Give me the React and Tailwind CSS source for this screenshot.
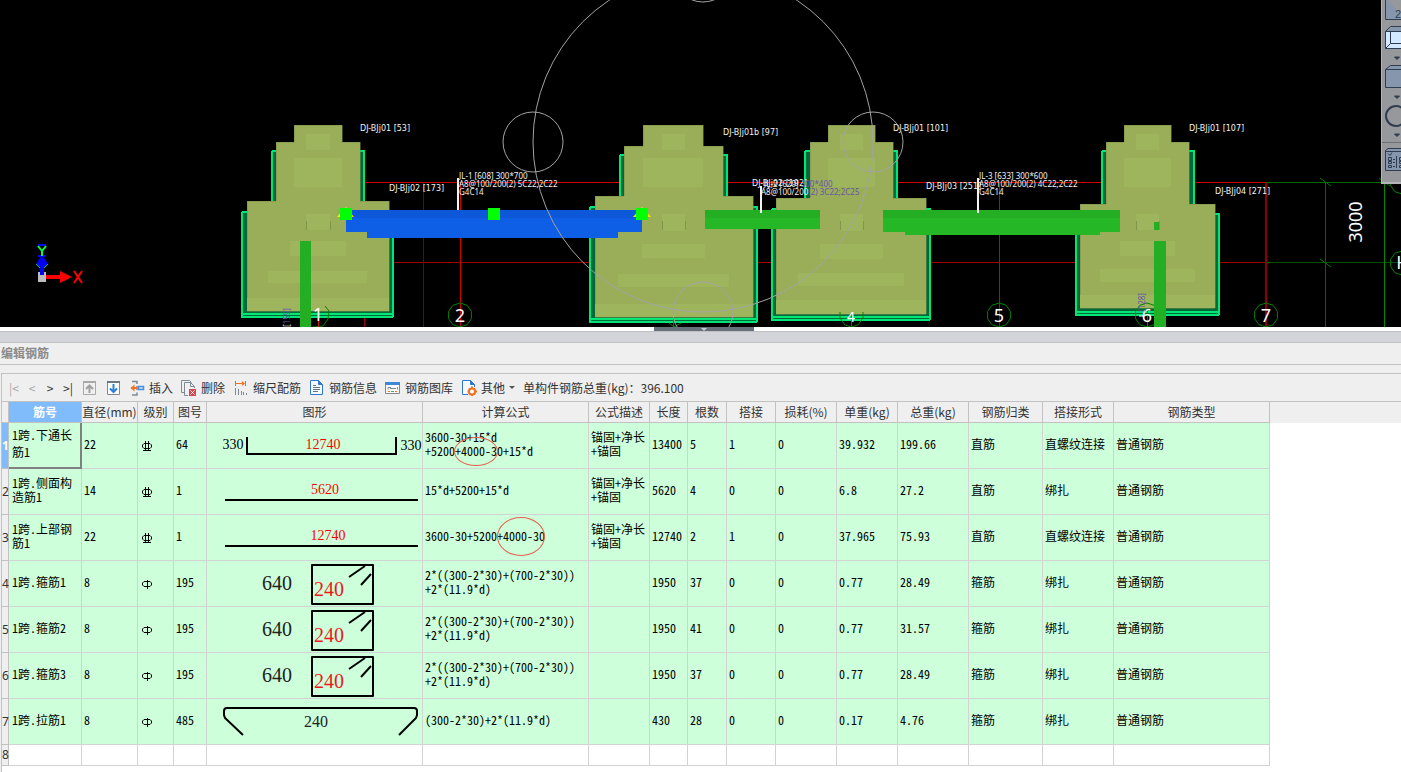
import React from "react";
import { clsx } from "clsx";

const UI_FONT = "font-['Noto_Sans_CJK_SC',sans-serif]";
// half-width latin glyphs, so that digits line up with the grid of the CJK text
const GRID_FONT =
  "font-['Noto_Sans_CJK_SC',sans-serif] [font-feature-settings:'hwid']";

const foundations = [
  {
    outer: [
      [272, 151, 92, 60],
      [242, 212, 151, 105],
    ],
    body: "M294 125H342V142H360V201H389V311H247V201H276V142H294Z",
    steps: [
      [306, 134, 24, 16],
      [294, 158, 48, 29],
      [306, 214, 24, 16],
      [290, 241, 56, 15],
      [268, 271, 99, 12],
      [247, 298, 142, 13],
    ],
  },
  {
    outer: [
      [620, 155, 107, 55],
      [590, 207, 167, 115],
    ],
    body: "M643 125H703V146H723V196H753V317H595V196H624V146H643Z",
    steps: [
      [662, 134, 23, 16],
      [643, 158, 60, 29],
      [662, 214, 23, 17],
      [642, 244, 63, 14],
      [618, 274, 111, 13],
      [595, 304, 158, 13],
    ],
  },
  {
    outer: [
      [805, 151, 92, 60],
      [772, 209, 158, 111],
    ],
    body: "M828 125H875V142H893V198H926V314H776V198H810V142H828Z",
    steps: [
      [840, 134, 23, 16],
      [828, 158, 47, 29],
      [840, 214, 23, 17],
      [820, 244, 63, 15],
      [798, 273, 106, 13],
      [776, 300, 150, 14],
    ],
  },
  {
    outer: [
      [1102, 151, 92, 60],
      [1076, 214, 143, 101],
    ],
    body: "M1124 125H1171V142H1189V204H1215V308H1080V204H1106V142H1124Z",
    steps: [
      [1136, 134, 23, 16],
      [1124, 158, 47, 29],
      [1136, 214, 23, 16],
      [1120, 241, 55, 15],
      [1100, 269, 95, 13],
      [1080, 295, 135, 13],
    ],
  },
];

const footingNotes = [
  [360, 131, "DJ-BJj01 [53]"],
  [389, 191, "DJ-BJj02 [173]"],
  [723, 135, "DJ-BJj01b [97]"],
  [752, 186, "DJ-BJj02 [192]"],
  [893, 131, "DJ-BJj01 [101]"],
  [926, 189, "DJ-BJj03 [251]"],
  [1189, 131, "DJ-BJj01 [107]"],
  [1215, 194, "DJ-BJj04 [271]"],
];

const beamNotes = [
  [459, 179, "JL-1 [608] 300*700"],
  [459, 187, "A8@100/200(2) 5C22;2C22"],
  [459, 195, "G4C14"],
  [979, 179, "JL-3 [633] 300*600"],
  [979, 187, "A8@100/200(2) 4C22;2C22"],
  [979, 195, "G4C14"],
];

const axisBubble = (cx, cy) => {
  const pts = [];
  for (let i = 0; i < 10; i++) {
    const a = (Math.PI / 5) * i;
    pts.push(`${(cx + 12 * Math.sin(a)).toFixed(1)},${(cy - 12 * Math.cos(a)).toFixed(1)}`);
  }
  return pts.join(" ");
};

const ModelCanvas = () => (
  <svg
    viewBox="0 0 1401 327"
    preserveAspectRatio="xMinYMin slice"
    className="block h-[327px] w-full bg-black"
  >
    {/* axis grid */}
    <g fill="none" shapeRendering="crispEdges">
      <path d="M360 182.5H1266M460.5 182V327M999.5 182V327" stroke="#d00000" />
      <path d="M389 262.5H1266M364.5 182V327" stroke="#a00000" />
      <path d="M423.5 182V327" stroke="#780000" />
      <path d="M1266 182V327" stroke="#900000" strokeWidth="2" />
      <path d="M1266 182.5H1401M1325.5 182V327" stroke="#006800" />
      <path d="M1266 262.5H1401" stroke="#005000" />
      <path d="M1384.5 182V327" stroke="#008800" />
    </g>
    <path
      d="M1320 178L1331 186M1320 259L1331 267M1379 178L1390 186"
      stroke="#007a00"
      fill="none"
    />

    {foundations.map((f) => (
      <g key={f.body} shapeRendering="crispEdges">
        {f.outer.map(([x, y, w, h]) => (
          <rect
            key={`${x}-${y}`}
            x={x}
            y={y}
            width={w}
            height={h}
            rx="1"
            fill="#006a3a"
            stroke="#00e676"
            strokeWidth="2"
          />
        ))}
        <path
          d={`M${f.outer[1][0]} ${f.outer[1][1] + f.outer[1][3] - 3}h${f.outer[1][2]}`}
          stroke="#00e676"
          strokeWidth="2"
        />
        <path d={f.body} fill="#9aae59" stroke="#7c8c48" strokeWidth="0.5" />
        {f.steps.map(([x, y, w, h]) => (
          <rect key={`${x}-${y}`} x={x} y={y} width={w} height={h} fill="#9fb55d" />
        ))}
        <path
          d={`M${f.steps[2][0]}.5 221V230M${f.steps[2][0] + f.steps[2][2]}.5 221V230`}
          stroke="#83944b"
        />
      </g>
    ))}

    {/* axis bubbles under the grid */}
    <g fill="none" stroke="#008200">
      <polygon points={axisBubble(460, 315)} />
      <polygon points={axisBubble(999, 315)} />
      <polygon points={axisBubble(1147, 315)} />
      <polygon points={axisBubble(1266, 315)} />
      <polygon points={axisBubble(1402, 263)} />
      <polygon points={axisBubble(1402, 182)} />
      <path d="M325 306L329 311L328 319L323 326L313 327" />
      <path d="M840 312V318L845 325L851 327L858 325L863 318V312M669 323L674 327L681 323" />
    </g>
    <path
      d="M318.5 318V327M673.5 318V327M851.5 314V327M1147.5 311V327"
      stroke="#d01818"
      shapeRendering="crispEdges"
    />
    <g
      className="font-['Noto_Sans',sans-serif] text-[18px]"
      fill="#ffffff"
      textAnchor="middle"
    >
      <text x="318" y="321">1</text>
      <text x="460" y="322">2</text>
      <text x="851" y="322" className="text-[14px]">4</text>
      <text x="999" y="322">5</text>
      <text x="1147" y="322">6</text>
      <text x="1266" y="322">7</text>
      <text x="1403" y="269">H</text>
      <text transform="translate(1362 222) rotate(-90)">3000</text>
    </g>
    <path d="M1139 316H1144" stroke="#ffffff" />

    {/* beams */}
    <g shapeRendering="crispEdges">
      <path d="M346 210H642V232H618V238H367V232H346Z" fill="#0f5fe6" />
      <path d="M346 210H642V218H346Z" fill="#0d58d8" />
      <path d="M705 210H820V229H705Z" fill="#26b726" />
      <path d="M705 210H820V218H705Z" fill="#24ae24" />
      <path d="M883 210H1120V232H1100V235H905V232H883Z" fill="#26b726" />
      <path d="M883 210H1120V218H883Z" fill="#24ae24" />
      <path d="M300 241H311V327H300ZM1154 241H1166V327H1154ZM1154 222H1159V230H1154Z" fill="#24ae24" />
      <path d="M457 178H459V210H457ZM760 186H762V213H760ZM977 178H979V213H977Z" fill="#f4f4f4" />
    </g>
    <path d="M346 207L354 217H337ZM642 207L651 217H633Z" fill="#ffee00" />
    <path d="M340 208h12v12h-12zM488 208h12v12h-12zM636 208h12v12h-12z" fill="#00ff00" />

    <g className="font-['DejaVu_Sans',sans-serif] text-[8px]" fill="#f2f2f2">
      {footingNotes.map(([x, y, label]) => (
        <text key={`${x}-${y}`} x={x} y={y}>
          {label}
        </text>
      ))}
    </g>
    <g className="font-['Noto_Sans',sans-serif] text-[8px]" fill="#f2f2f2">
      {beamNotes.map(([x, y, label]) => (
        <text key={`${x}-${y}`} x={x} y={y}>
          {label}
        </text>
      ))}
      <text x="764" y="187">
        JL-2 [629] <tspan fill="#6656a8">300*400</tspan>
      </text>
      <text x="761" y="195">
        A8@100/200<tspan fill="#6656a8">(2) 3C22;2C25</tspan>
      </text>
      <text transform="translate(290 327) rotate(-90)">
        [<tspan fill="#6656a8">159]</tspan>
      </text>
      <text transform="translate(1145 312) rotate(-90)" fill="#6656a8">
        [128]
      </text>
    </g>

    {/* orbit circle */}
    <g fill="none" stroke="#a3a3a3">
      <circle cx="703" cy="142" r="170" />
      <circle cx="533" cy="142" r="30" />
      <circle cx="873" cy="142" r="30" />
      <circle cx="703" cy="312" r="30" />
      <circle cx="703" cy="-28" r="30" />
    </g>

    {/* coordinate axes */}
    <path d="M38 272h8v10h-8z" fill="#bdbdbd" />
    <path d="M46 275H60V271L72 277L60 283V279H46Z" fill="#ff0000" />
    <path d="M74 271L82 283M82 271L74 283" stroke="#ff0000" strokeWidth="2" />
    <path d="M40 275V268L36 264L42 255L48 264L44 268V275Z" fill="#0000ff" />
    <path d="M36 264L40 268M48 264L44 268" stroke="#00c850" />
    <path d="M38 245H46M38 256H46" stroke="#0000ff" strokeWidth="2" />
    <path d="M38 246L42 251L46 246M42 251V256" stroke="#00ff40" strokeWidth="2" fill="none" />
  </svg>
);

const ViewBar = () => (
  <div className="absolute top-0 right-0 flex w-5 flex-col overflow-hidden border-b-2 border-l border-[#b4b5b8] bg-[#96989b]">
    <button aria-label="2D" className="h-[22px]">
      <svg className="block" width="19" height="22" fill="none" stroke="#2f3d50">
        <path d="M3.5 -1V19.5H24" fill="#8596ad" />
        <text
          x="13"
          y="18"
          className="font-['Liberation_Sans',sans-serif] text-[11px]"
          fill="#2f3d50"
          stroke="none"
        >
          2
        </text>
      </svg>
    </button>
    <button aria-label="三维视图" className="h-[42px]">
      <svg className="block" width="19" height="42" stroke="#2f3d50">
        <path d="M3.5 9.5L8.5 4.5H24V9.5Z" fill="#8596ad" />
        <path d="M3.5 9.5H24V26.5H3.5Z" fill="#d3e9ff" />
        <path d="M8.5 9.5V21.5H24M3.5 26.5L8.5 21.5" fill="none" />
        <path d="M12.5 35H17.5L15 37.5Z" fill="#2f3d50" />
      </svg>
    </button>
    <button aria-label="显示方式" className="h-[39px]">
      <svg className="block" width="19" height="39" stroke="#2f3d50">
        <path d="M3.5 5.5L8.5 1.5H24V5.5Z" fill="#8596ad" />
        <path d="M3.5 5.5H24V23.5H3.5Z" fill="#8596ad" />
        <path d="M12.5 32H17.5L15 34.5Z" fill="#2f3d50" />
      </svg>
    </button>
    <button aria-label="旋转" className="h-10 border-b border-[#6d6f73]">
      <svg className="block" width="19" height="39" stroke="#2f3d50">
        <circle cx="14" cy="13" r="10" fill="none" strokeWidth="2" />
        <path d="M12.5 31H17.5L15 33.5Z" fill="#2f3d50" />
      </svg>
    </button>
    <button aria-label="显示设置" className="h-[39px]">
      <svg className="block" width="19" height="39" fill="none" stroke="#2f3d50">
        <path d="M3.5 27.5V7.5L6 5.5H24V27.5Z" fill="#8596ad" />
        <path d="M3.5 8.5H24M6 10.5L8 12.5L10 9.5M6.5 14.5h3v3h-3zM6.5 18.5h3v2h-3zM6.5 22.5h3v2h-3zM11 16.5h2M11 19.5h2M11 23.5h2M14.5 13V25M17.5 14.5h3v3h-3zM17.5 18.5h3v2h-3zM17.5 22.5h3v2h-3z" />
      </svg>
    </button>
  </div>
);

const InsertIcon = () => (
  <svg width="16" height="16" fill="none" strokeWidth="1.5">
    <path d="M3 1.5H8V4M3 15H8V12.5M8 6V10" stroke="#7d8a96" />
    <path d="M2 8H8" stroke="#ee7322" strokeWidth="2" />
    <path d="M5.5 4.5V11.5L1.5 8Z" fill="#ee7322" />
    <path d="M9.5 6.5H14.5V9.5H9.5Z" stroke="#4a8fdc" fill="#cfe3f8" />
  </svg>
);

const DeleteIcon = () => (
  <svg width="16" height="16" fill="none">
    <path d="M3 12.5H.5V.5H8.5L10.5 2.5" stroke="#7d8a96" />
    <path d="M7 15.5H3.5V2.5H9.5L13.5 6.5V8M9.5 2.5V6.5H13.5" stroke="#7d8a96" />
    <path d="M8 9H15V16H8Z" fill="#d9434c" />
    <path d="M9.5 10.5L13.5 14.5M13.5 10.5L9.5 14.5" stroke="#fff" />
  </svg>
);

const ScaleIcon = () => (
  <svg width="16" height="16" fill="none">
    <path
      d="M2.5 1V6M12.5 1V6M2.5 8V15M5.5 9V15M8.5 11V15M10.5 12V15M13.5 13V15"
      stroke="#7d8a96"
    />
    <path d="M3 3.5H11" stroke="#ee7322" />
    <path d="M9 1L12 3.5L9 6Z" fill="#ee7322" />
  </svg>
);

const InfoIcon = () => (
  <svg width="16" height="16" fill="none">
    <path d="M1.5 .5H9.5L13.5 4.5V14.5H1.5Z" stroke="#2f78cf" fill="#f7fbff" />
    <path d="M9.5 .5V4.5H13.5" stroke="#2f78cf" fill="#2f78cf" />
    <path d="M4 5.5H7M4 7.5H11M4 9.5H11M4 11.5H9" stroke="#5f7488" />
  </svg>
);

const LibraryIcon = () => (
  <svg width="16" height="16" fill="none">
    <path d="M.5 2.5H14.5V13.5H.5Z" stroke="#7d8a96" fill="#fafafa" />
    <path d="M0 2H15V5H0Z" fill="#3f86d6" />
    <path d="M3 9.5V7.5H6M5 8.5H11M12.5 7V9.5" stroke="#7d8a96" />
    <path d="M3 11.5H5M10 11.5H12" stroke="#ee7322" />
    <path d="M6 11.5H9" stroke="#4aa070" />
  </svg>
);

const OtherIcon = () => (
  <svg width="16" height="16" fill="none">
    <path d="M7 14.5H1.5V.5H9.5L13.5 4.5V7" stroke="#2f78cf" fill="#f7fbff" />
    <path d="M9.5 .5V4.5H13.5Z" stroke="#2f78cf" fill="#2f78cf" />
    <circle cx="11" cy="11.5" r="3" stroke="#ee7322" strokeWidth="2" fill="#fff" />
    <path
      d="M11 6.5V8M11 15V16M6.5 11.5H8M14 11.5H16M8 8.5L9 9.5M14 8.5L13 9.5M8 14.5L9 13.5M14 14.5L13 13.5"
      stroke="#ee7322"
      strokeWidth="2"
    />
  </svg>
);

const toolButtons = [
  { label: "插入", Icon: InsertIcon },
  { label: "删除", Icon: DeleteIcon },
  { label: "缩尺配筋", Icon: ScaleIcon },
  { label: "钢筋信息", Icon: InfoIcon },
  { label: "钢筋图库", Icon: LibraryIcon },
  { label: "其他", Icon: OtherIcon, menu: true },
];

const Toolbar = () => (
  <div className="flex h-[29px] items-center border-y border-[#c2c2c2] pl-[3px]">
    <button aria-label="第一条" className="w-[18px] text-[#a8a8a8]">|&lt;</button>
    <button aria-label="上一条" className="w-[18px] text-[#a8a8a8]">&lt;</button>
    <button aria-label="下一条" className="w-[18px]">&gt;</button>
    <button aria-label="最后一条" className="w-[18px]">&gt;|</button>
    <button aria-label="上移" className="flex w-6 justify-center">
      <svg width="13" height="14" fill="none">
        <path d="M.5 .5H12.5V13.5H.5Z" stroke="#a9a9a9" />
        <path d="M0 0H13V2H0Z" fill="#a9a9a9" />
        <path d="M6.5 12V5M3 8L6.5 4.5L10 8" stroke="#a0a0a0" strokeWidth="2" />
      </svg>
    </button>
    <button aria-label="下移" className="mr-1 flex w-6 justify-center">
      <svg width="13" height="14" fill="none">
        <path d="M.5 .5H12.5V13.5H.5Z" stroke="#7d8a96" fill="#fff" />
        <path d="M0 0H13V2H0Z" fill="#6b7884" />
        <path d="M6.5 3V10M3 7.5L6.5 11L10 7.5" stroke="#2f7fd8" strokeWidth="2" />
      </svg>
    </button>
    <div className="flex items-center gap-2">
      {toolButtons.map(({ label, Icon, menu }) => (
        <button key={label} className="flex items-center gap-1">
          <Icon />
          {label}
          {menu && (
            <svg width="6" height="4">
              <path d="M0 0H6L3 3Z" fill="#555" />
            </svg>
          )}
        </button>
      ))}
      <span>单构件钢筋总重(kg)：396.100</span>
    </div>
  </div>
);

const columns = [
  ["筋号", "w-[73px]"],
  ["直径(mm)", "w-[56px]"],
  ["级别", "w-[36px]"],
  ["图号", "w-[33px]"],
  ["图形", "w-[216px]"],
  ["计算公式", "w-[166px]"],
  ["公式描述", "w-[61px]"],
  ["长度", "w-[38px]"],
  ["根数", "w-[39px]"],
  ["搭接", "w-[49px]"],
  ["损耗(%)", "w-[61px]"],
  ["单重(kg)", "w-[61px]"],
  ["总重(kg)", "w-[71px]"],
  ["钢筋归类", "w-[74px]"],
  ["搭接形式", "w-[71px]"],
  ["钢筋类型", "w-[156px]"],
];

const stirrup = "2*((300-2*30)+(700-2*30))\n+2*(11.9*d)";
const anchor = "锚固+净长\n+锚固";

const rows = [
  ["1跨.下通长\n筋1", "22", "C", "64", "hook", "3600-30+15*d\n+5200+4000-30+15*d", anchor, "13400", "5", "1", "0", "39.932", "199.66", "直筋", "直螺纹连接", "普通钢筋"],
  ["1跨.侧面构\n造筋1", "14", "C", "1", "5620", "15*d+5200+15*d", anchor, "5620", "4", "0", "0", "6.8", "27.2", "直筋", "绑扎", "普通钢筋"],
  ["1跨.上部钢\n筋1", "22", "C", "1", "12740", "3600-30+5200+4000-30", anchor, "12740", "2", "1", "0", "37.965", "75.93", "直筋", "直螺纹连接", "普通钢筋"],
  ["1跨.箍筋1", "8", "A", "195", "stirrup", stirrup, "", "1950", "37", "0", "0", "0.77", "28.49", "箍筋", "绑扎", "普通钢筋"],
  ["1跨.箍筋2", "8", "A", "195", "stirrup", stirrup, "", "1950", "41", "0", "0", "0.77", "31.57", "箍筋", "绑扎", "普通钢筋"],
  ["1跨.箍筋3", "8", "A", "195", "stirrup", stirrup, "", "1950", "37", "0", "0", "0.77", "28.49", "箍筋", "绑扎", "普通钢筋"],
  ["1跨.拉筋1", "8", "A", "485", "tie", "(300-2*30)+2*(11.9*d)", "", "430", "28", "0", "0", "0.17", "4.76", "箍筋", "绑扎", "普通钢筋"],
];

const GradeSymbol = ({ grade }) => (
  <svg className="ml-0.5 block" width="11" height="12" fill="none" stroke="#000">
    {grade === "C" ? (
      <path d="M3 3.5H8L9.5 5V7L8 8.5H2L.5 7V5L2 3.5ZM3.5 1V10.5M6.5 1V10.5M1 10.5H9" />
    ) : (
      <path d="M2 3.5H8L9.5 5V7L8 8.5H2L.5 7V5L2 3.5ZM5.5 2V11" />
    )}
  </svg>
);

const BarShape = ({ kind }) => (
  <svg
    viewBox="0 0 215 45"
    className="block h-[45px] w-full font-['Liberation_Serif',serif] text-[14px]"
    fill="none"
    stroke="#000"
    strokeWidth="2"
    textAnchor="middle"
  >
    {kind === "hook" && (
      <>
        <path d="M40 14V31H189V14" />
        <g stroke="none">
          <text x="26" y="26" fill="#000">330</text>
          <text x="116" y="26" fill="#f00">12740</text>
          <text x="204" y="27" fill="#000">330</text>
        </g>
      </>
    )}
    {kind === "stirrup" && (
      <>
        <path d="M105 4H166V43H105ZM142 16L158 5M154 24L164 13" strokeLinejoin="round" />
        <g stroke="none" className="text-[20px]">
          <text x="70" y="29" fill="#222">640</text>
          <text x="122" y="35" fill="#f01820">240</text>
        </g>
      </>
    )}
    {kind === "tie" && (
      <>
        <path d="M36 36L18 19L17 16V12Q17 9 20 9H207Q210 9 210 12V16L209 19L192 36" />
        <text x="109" y="28" fill="#222" stroke="none" className="text-[16px]">
          240
        </text>
      </>
    )}
    {(kind === "5620" || kind === "12740") && (
      <>
        <path d="M18 31H211" />
        <text x={kind === "5620" ? 118 : 121} y="25" fill="#f00" stroke="none">
          {kind}
        </text>
      </>
    )}
  </svg>
);

const RebarTable = () => (
  <table className="w-full table-fixed border-separate border-spacing-0">
    <thead>
      <tr className="h-[21px] bg-[#efefef]">
        <th className="w-[7px] border-r border-b border-[#c2c2c2] p-0" />
        {columns.map(([name, width], i) => (
          <th
            key={name}
            scope="col"
            className={clsx(
              width,
              "border-r border-b border-[#c2c2c2] p-0 leading-5 whitespace-nowrap",
              i === 0 ? "bg-[#80bbfb] font-bold text-white" : "font-normal"
            )}
          >
            {name}
          </th>
        ))}
        <th className="p-0" />
      </tr>
    </thead>
    <tbody className={clsx(GRID_FONT, "text-black")}>
      {rows.map((row, r) => (
        <tr key={row[0]} className="h-[46px] bg-[#ccffda]">
          <th
            scope="row"
            className={clsx(
              "border-r border-b border-[#c2c2c2] p-0 font-['Noto_Sans',sans-serif] text-[12px]",
              r === 0
                ? "bg-[#80bbfb] font-bold text-white"
                : "bg-[#efefef] font-normal text-[#333]"
            )}
          >
            {r + 1}
          </th>
          {row.map((value, c) => (
            <td
              key={c}
              className={clsx(
                "relative whitespace-pre",
                c === 4 && "p-0",
                c === 2 && "py-0 pr-0 pl-0.5",
                c === 0 && "pt-0 pr-0 pb-1 pl-[3px]",
                c !== 0 && c !== 2 && c !== 4 && "pt-0 pr-0 pb-1 pl-0.5",
                r === 0 && c === 0
                  ? "border-r-2 border-b-2 border-[#808080] leading-[17px]"
                  : "border-r border-b border-[#d3d3d3] leading-[14px]"
              )}
            >
              {c === 2 && <GradeSymbol grade={value} />}
              {c === 4 && <BarShape kind={value} />}
              {c !== 2 && c !== 4 && value}
              {c === 5 && r === 0 && (
                <span className="absolute top-3.5 left-[31px] h-[29px] w-11 rounded-[50%] border border-[#e8604f]" />
              )}
              {c === 5 && r === 2 && (
                <span className="absolute top-0.5 left-[74px] h-[39px] w-12 rounded-[50%] border border-[#e8604f]" />
              )}
            </td>
          ))}
          <td className="bg-white p-0" />
        </tr>
      ))}
      <tr className="h-[21px] bg-white">
        <th
          scope="row"
          className="border-r border-b border-[#c2c2c2] bg-[#efefef] p-0 font-['Noto_Sans',sans-serif] text-[12px] leading-5 font-normal text-[#333]"
        >
          8
        </th>
        {columns.map(([name]) => (
          <td key={name} className="border-r border-b border-[#d3d3d3] p-0" />
        ))}
        <td className="p-0" />
      </tr>
    </tbody>
  </table>
);

const App = () => (
  <div
    className={clsx(
      UI_FONT,
      "flex min-h-screen flex-col bg-[#efefef] text-[12px] leading-4 text-[#333]"
    )}
  >
    <div className="relative">
      <ModelCanvas />
      <ViewBar />
    </div>

    <div className="flex h-1 justify-center bg-white pl-1.5">
      <button
        aria-label="折叠"
        className="flex w-[100px] justify-center bg-[#66707a]"
      >
        <svg width="6" height="4">
          <path d="M0 1H6L3 4Z" fill="#c8ccd0" />
        </svg>
      </button>
    </div>
    <div className="h-3 border-y border-[#bfc0c5] bg-[#d3d4d9]" />

    <h2 className="h-[22px] border-b border-[#c2c2c2] pl-px leading-5 font-bold text-[#8a8a8a]">
      编辑钢筋
    </h2>

    <div className="mt-2 ml-px flex flex-1 flex-col border-l border-[#c2c2c2]">
      <Toolbar />
      <div className="flex-1 bg-white">
        <RebarTable />
      </div>
    </div>
  </div>
);

export default App;
